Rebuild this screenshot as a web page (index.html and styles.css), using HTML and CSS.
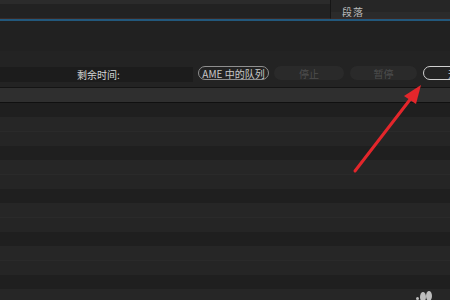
FILE: index.html
```html
<!DOCTYPE html>
<html lang="zh-CN">
<head>
    <meta charset="utf-8">
    <title>渲染队列</title>
    <link rel="stylesheet" href="styles.css">
</head>
<body>

<div class="top">
    <div class="top-left"></div>
    <div class="panel">
        <span class="panel-title">段落</span>
    </div>
</div>
<div class="blue-line"></div>

<div class="gap"></div>

<div class="toolbar">
    <div class="field">
        <span class="label">剩余时间:</span>
    </div>
    <div class="buttons">
        <span class="btn btn-outline">AME 中的队列</span>
        <span class="btn btn-off">停止</span>
        <span class="btn btn-off">暂停</span>
        <span class="btn btn-start">开始</span>
    </div>
</div>

<div class="bar"></div>
<div class="rows"></div>

<!-- annotation arrow -->
<svg class="arrow" width="450" height="300" viewBox="0 0 450 300">
    <line x1="355" y1="171" x2="412" y2="97" stroke="#e3262b" stroke-width="3" stroke-linecap="round"/>
    <polygon points="421,85 404,96 416,104" fill="#e3262b"/>
</svg>

<div class="mark">
    <span class="dot dot-a"></span>
    <span class="dot dot-b"></span>
    <span class="dot dot-c"></span>
</div>

</body>
</html>
```

FILE: styles.css
```css
:root {
    --bg: #232323;
    --text: #d6d6d6;
}

body {
    margin: 0;
    width: 450px;
    height: 300px;
    overflow: hidden;
    position: relative;

    font-family: "Noto Sans CJK SC", "Noto Sans", sans-serif;
    background: var(--bg);
}

.top {
    display: flex;
    height: 19px;
}

.top-left {
    flex: 1;
    border-top: 4px solid #2b2b2b;
    background: #222;
    border-bottom: 1px solid #3a2a26;
}

.panel {
    width: 119px;
    border-left: 1px solid #161616;
    background: linear-gradient(#262626 0, #262626 12px, #2b2b2b 12px);
    border-bottom: 1px solid #3a2a26;
    position: relative;
}

.panel-title {
    position: absolute;
    left: 11px;
    top: 6px;
    font-size: 10px;
    line-height: 12px;
    color: #bbb;
    letter-spacing: 1px;
}

.blue-line {
    height: 2px;
    background: #22587c;
}

.gap {
    height: 30px;
    background: #212121;
}

.toolbar {
    display: flex;
    align-items: flex-start;
    height: 36px;
    padding-top: 15px;
    box-sizing: border-box;
    background: #232323;
}

.field {
    flex: none;
    width: 193px;
    height: 15px;
    margin-top: 1px;
    background: #1c1c1c;
    display: flex;
    align-items: center;
}

.label {
    padding-left: 77px;
    font-size: 10px;
    color: var(--text);
}

.buttons {
    flex: none;
    display: flex;
    gap: 5px;
    margin-left: 5px;
}

.btn {
    flex: none;
    display: flex;
    align-items: center;
    justify-content: center;
    height: 14px;
    width: 70px;
    box-sizing: border-box;
    border-radius: 8px;
    font-size: 10px;
    white-space: nowrap;
}

.btn-outline {
    border: 1px solid #8f8f8f;
    color: #c8c8c8;
    width: 71px;
}

.btn-off {
    background: #2a2a2a;
    color: #4e4e4e;
}

.btn-off + .btn-off {
    width: 67px;
    margin-left: 1px;
}

.btn-start {
    border: 1px solid #d0d0d0;
    color: #ccc;
    width: 70px;
    margin-left: 1px;
    justify-content: flex-start;
    padding-left: 24px;
}

.bar {
    height: 14px;
    border-top: 1px solid #141414;
    border-bottom: 1px solid #101010;
    background: #2f2f2f;
}

.rows {
    height: 200px;
    background: repeating-linear-gradient(
        #1f1f1f 0, #1f1f1f 14px,
        #262626 14px, #262626 28px,
        #2a2a2a 28px, #2a2a2a 29px,
        #252525 29px, #252525 43px
    );
}

.arrow {
    position: absolute;
    left: 0;
    top: 0;
}

.mark {
    position: absolute;
    left: 416px;
    top: 289px;
    width: 20px;
    height: 11px;
}

.dot {
    position: absolute;
    background: #bdbdbd;
    border-radius: 50%;
}

.dot-a {
    left: 0;
    top: 8px;
    width: 3px;
    height: 3px;
}

.dot-b {
    left: 4px;
    top: 3px;
    width: 6px;
    height: 10px;
}

.dot-c {
    left: 10px;
    top: 2px;
    width: 6px;
    height: 10px;
}
```
